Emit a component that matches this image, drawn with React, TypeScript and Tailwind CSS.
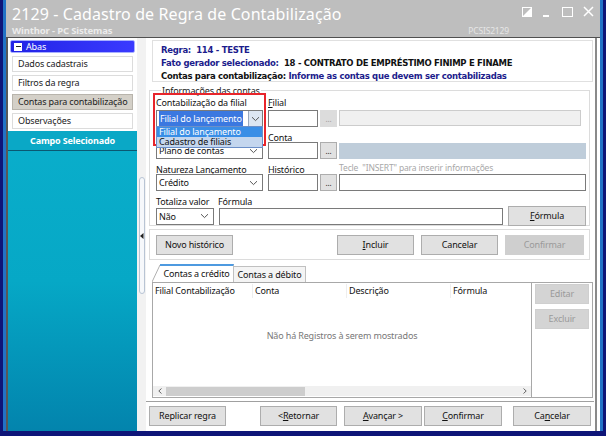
import React from "react";

const F = { fontFamily: '"Noto Sans", "Open Sans", sans-serif' } as React.CSSProperties;

function Btn({ children, className = "", disabled = false }: { children: React.ReactNode; className?: string; disabled?: boolean }) {
  return (
    <div
      className={
        "flex items-center justify-center h-[20px] border text-[9px] tracking-[-0.15px] " +
        (disabled ? "bg-[#cfcfcf] border-[#cfcfcf] text-[#9a9a9a] " : "bg-[#e1e1e1] border-[#adadad] text-[#111] ") +
        className
      }
    >
      {children}
    </div>
  );
}

function Chevron() {
  return (
    <svg width="9" height="6" viewBox="0 0 9 6">
      <path d="M1 1.2 L4.5 4.6 L8 1.2" fill="none" stroke="#555" strokeWidth="1" />
    </svg>
  );
}

function Select({ text, className = "", highlight = false }: { text: string; className?: string; highlight?: boolean }) {
  return (
    <div className={"flex items-center h-[17px] border border-[#7a7a7a] bg-white pl-[2px] text-[9px] text-[#111] " + className}>
      <span className="flex-1 leading-none">
        {highlight ? <span className="bg-[#3b78e0] text-white px-[1px] py-[1px]">{text}</span> : text}
      </span>
      {highlight ? (
        <span className="w-[14px] h-full border-l border-[#9aa8bc] bg-[#dde6f2] flex items-center justify-center">
          <Chevron />
        </span>
      ) : (
        <span className="pr-[4px] flex items-center">
          <Chevron />
        </span>
      )}
    </div>
  );
}

function Input({ className = "" }: { className?: string }) {
  return <div className={"h-[17px] border border-[#7a7a7a] bg-white " + className} />;
}

function Dots({ disabled = false }: { disabled?: boolean }) {
  return (
    <div
      className={
        "w-[17px] h-[17px] flex items-end justify-center pb-[3px] text-[8px] leading-none border " +
        (disabled ? "bg-[#dcdcdc] border-[#dcdcdc] text-[#9a9a9a]" : "bg-[#e1e1e1] border-[#adadad] text-[#222]")
      }
    >
      ...
    </div>
  );
}

export default function App() {
  return (
    <div className="w-[606px] h-[436px] bg-[#0e1578] pl-[3px] pr-[3px] pb-[5px] overflow-hidden tracking-[-0.15px]" style={F}>
      <div className="w-full h-full flex flex-col bg-[#c4c4c4] border-l-[3px] border-r-[3px] border-[#2273c6]">
        {/* title bar */}
        <div className="h-[37px] shrink-0 relative bg-[#bebebe] pl-[6px]">
          <div className="text-white text-[16px] leading-none pt-[6px] tracking-[0.1px]">
            2129 - Cadastro de Regra de Contabilização
          </div>
          <div className="flex items-end">
            <div className="text-[#ececec] text-[9.5px] font-bold pt-[4px] leading-none">Winthor - PC Sistemas</div>
            <div className="ml-auto mr-[91px] text-[#e6e6e6] text-[8.5px] leading-none">PCSIS2129</div>
          </div>
          <div className="absolute right-[6px] top-[6px] flex items-center gap-[10px]">
            <svg width="10" height="10" viewBox="0 0 10 10">
              <rect x="0.5" y="0.5" width="9" height="9" fill="none" stroke="#fff" />
              <path d="M0 10 L10 0 L10 10 Z" fill="#fff" />
            </svg>
            <svg width="10" height="10" viewBox="0 0 10 10">
              <rect x="1" y="8" width="6" height="2" fill="#fff" />
            </svg>
            <svg width="11" height="10" viewBox="0 0 11 10">
              <rect x="0.5" y="0.5" width="10" height="9" fill="none" stroke="#fff" />
            </svg>
            <svg width="11" height="11" viewBox="0 0 11 11">
              <path d="M1 1 L10 10 M10 1 L1 10" stroke="#fff" strokeWidth="1.5" />
            </svg>
          </div>
        </div>

        <div className="flex-1 flex min-h-0 border-t border-[#505050]">
          {/* sidebar */}
          <div className="w-[131px] shrink-0 flex flex-col bg-white border-l-[2px] border-[#585858]">
            <div className="px-[2px] pt-[2px] flex flex-col gap-[3px] bg-white pb-[2px]">
              <div className="h-[13px] flex items-center gap-[4px] pl-[3px] rounded-[2px] border border-[#a8b0ff] bg-gradient-to-r from-[#2222e6] to-[#3a3aff] text-white text-[9px]">
                <span className="w-[8px] h-[8px] bg-white flex items-center justify-center">
                  <span className="w-[5px] h-[1.5px] bg-[#222]" />
                </span>
                Abas
              </div>
              {["Dados cadastrais", "Filtros da regra", "Contas para contabilização", "Observações"].map((t, i) => (
                <div
                  key={t}
                  className={
                    "h-[16px] mx-[2px] flex items-center pl-[5px] text-[9px] text-[#222] border whitespace-nowrap " +
                    (i === 2 ? "bg-[#d4d0c8] border-[#b8b4ac]" : "bg-white border-[#dcdcdc]")
                  }
                >
                  {t}
                </div>
              ))}
            </div>
            <div className="flex-1 flex flex-col bg-gradient-to-b from-[#0aaecb] via-[#06a8c6] to-[#0384ad]">
              <div className="h-[20px] flex items-center justify-center text-white font-bold text-[9px] border-b border-[#0a5872] bg-[#0aa8c6]">
                Campo Selecionado
              </div>
              <div className="flex-1" />
            </div>
          </div>

          {/* splitter */}
          <div className="w-[9px] shrink-0 bg-[#f2f2f2] flex flex-col items-center pt-[139px]">
            <div className="w-[6px] h-[117px] rounded-[3px] border border-[#b8c4d4] bg-[#f6f8fb] flex items-center justify-center">
              <svg width="4" height="6" viewBox="0 0 4 6">
                <path d="M3.5 0 L0 3 L3.5 6 Z" fill="#222" />
              </svg>
            </div>
          </div>

          {/* main panel */}
          <div className="flex-1 min-w-0 flex flex-col bg-white border-r-[2px] border-[#8a8a8a] pr-[1px] text-[#111]">
            {/* info box */}
            <div className="mt-[2px] ml-[6px] mr-[1px] h-[42px] shrink-0 border border-[#e0e0e0] pl-[8px] pt-[3px] flex flex-col gap-[1px] text-[8.5px] font-bold leading-[12px]" style={{ fontFamily: '"DejaVu Sans", Verdana, sans-serif', letterSpacing: "-0.3px" }}>
              <div className="text-[#1c1c8c]">Regra:&nbsp; 114 - TESTE</div>
              <div>
                <span className="text-[#1c1c8c]">Fato gerador selecionado:</span>&nbsp; <span className="text-[#111]">18 - CONTRATO DE EMPRÉSTIMO FINIMP E FINAME</span>
              </div>
              <div>
                <span className="text-[#111]">Contas para contabilização:</span>&nbsp;<span className="text-[#1c1c8c]">Informe as contas que devem ser contabilizadas</span>
              </div>
            </div>

            {/* group */}
            <fieldset className="shrink-0 mt-[3px] ml-[3px] mr-[4px] border border-[#dcdcdc] pl-[6px] pr-[3px] h-[141px]">
              <legend className="ml-[5px] px-[1px] text-[9px] leading-[11px] text-[#222]">Informações das contas</legend>
              <div className="relative grid grid-cols-[107px_53px_17px_1fr] gap-x-[2px] text-[9px] leading-none">
                {/* row 1 */}
                <div className="pt-[2px] h-[14px]">Contabilização da filial</div>
                <div className="pt-[2px] h-[14px] ml-[3px] col-span-3"><u>F</u>ilial</div>
                <Select text="Filial do lançamento" className="bg-[#cfdcf0]" highlight />
                <Input className="ml-[3px]" />
                <Dots disabled />
                <div className="h-[16px] border border-[#cccccc] bg-[#f0f0f0] mr-[5px]" />
                {/* row 2 */}
                <div className="pt-[6px] h-[15px]" />
                <div className="pt-[6px] h-[15px] ml-[3px] col-span-3">Con<u>t</u>a</div>
                <Select text="Plano de contas" />
                <Input className="ml-[3px]" />
                <Dots />
                <div className="h-[16px] mt-[1px] bg-[#bfcdda]" />
                {/* row 3 */}
                <div className="pt-[6px] h-[15px]">Natureza Lançamento</div>
                <div className="pt-[6px] h-[15px] ml-[3px] col-span-2"><u>H</u>istórico</div>
                <div className="pt-[5px] h-[15px] text-[#a8a8a8] text-[8.5px] whitespace-nowrap">Tecle &nbsp;"INSERT" para inserir informações</div>
                <Select text="Crédito" />
                <Input className="ml-[3px]" />
                <Dots />
                <Input />

                {/* dropdown overlay */}
                <div className="absolute left-[-3px] top-[-3px] w-[113px] h-[53px] border-2 border-[#e8252b]" />
                <div className="absolute left-[0px] top-[30px] w-[107px] flex flex-col text-[9px] leading-none border border-[#6b8fc8] bg-white">
                  <div className="h-[10px] bg-[#3a8ee6] text-white pl-[2px]">Filial do lançamento</div>
                  <div className="h-[10px] bg-[#c4d6ee] text-[#111] pl-[2px] leading-[10px]">Cadastro de filiais</div>
                </div>
              </div>
              {/* row 4 */}
              <div className="flex text-[9px] leading-none">
                <div className="pt-[6px] h-[15px] w-[62px] shrink-0">Totaliza valor</div>
                <div className="pt-[6px] h-[15px]">Fórmula</div>
              </div>
              <div className="flex items-center">
                <Select text="Não" className="w-[58px]" />
                <div className="ml-[5px] w-[284px] h-[17px] border border-[#7a7a7a] bg-white" />
                <Btn className="ml-[5px] w-[78px]">
                  <u>F</u>órmula
                </Btn>
              </div>
            </fieldset>

            {/* buttons box */}
            <div className="shrink-0 mt-[3px] ml-[3px] mr-[4px] h-[31px] border border-[#dcdcdc] flex items-center pl-[6px]">
              <Btn className="w-[77px]">Novo histórico</Btn>
              <Btn className="w-[77px] ml-[104px]">
                <u>I</u>ncluir
              </Btn>
              <Btn className="w-[77px] ml-[7px]">Cancelar</Btn>
              <Btn className="w-[79px] ml-[7px]" disabled>
                Confirmar
              </Btn>
            </div>

            {/* tabs */}
            <div className="shrink-0 mt-[4px] ml-[6px] h-[18px] flex items-end text-[9px]">
              <svg width="8" height="18" viewBox="0 0 8 18" className="block">
                <path d="M0 18 L8 1" stroke="#b0b0b0" fill="none" />
              </svg>
              <div className="h-[18px] w-[74px] flex items-center justify-center border-t-2 border-[#4e9ae0] bg-white border-r border-r-[#c0c0c0]">
                Contas a crédito
              </div>
              <div className="h-[16px] w-[72px] flex items-center justify-center border-t border-r border-[#c0c0c0] bg-[#f4f4f4]">
                Contas a débito
              </div>
            </div>

            {/* grid area */}
            <div className="shrink-0 ml-[6px] mr-[1px] h-[116px] flex border border-[#a8a8a8]">
              <div className="flex-1 flex flex-col border-r border-[#a8a8a8] text-[9px]">
                <div className="h-[16px] flex items-center text-[#111]">
                  <div className="w-[100px] pl-[2px] border-r border-[#eeeeee]">Filial Contabilização</div>
                  <div className="w-[94px] pl-[2px] border-r border-[#eeeeee]">Conta</div>
                  <div className="w-[104px] pl-[2px] border-r border-[#eeeeee]">Descrição</div>
                  <div className="pl-[2px]">Fórmula</div>
                </div>
                <div className="flex-1 flex items-center justify-center text-[#777] pb-[14px]">Não há Registros à serem mostrados</div>
                <div className="h-[10px] mb-[1px] flex items-center bg-[#f0f0f0] text-[#555]">
                  <div className="w-[13px] flex justify-center">
                    <svg width="4" height="6" viewBox="0 0 4 6"><path d="M3.5 0.5 L0.8 3 L3.5 5.5" fill="none" stroke="#666" /></svg>
                  </div>
                  <div className="w-[139px] h-[9px] bg-[#cdcdcd]" />
                  <div className="flex-1" />
                  <div className="w-[13px] flex justify-center">
                    <svg width="4" height="6" viewBox="0 0 4 6"><path d="M0.5 0.5 L3.2 3 L0.5 5.5" fill="none" stroke="#666" /></svg>
                  </div>
                </div>
              </div>
              <div className="w-[60px] flex flex-col gap-[5px] pt-[1px] px-[3px]">
                <Btn disabled className="bg-[#d4d4d4] border-[#c8c8c8]">Editar</Btn>
                <Btn disabled className="bg-[#d4d4d4] border-[#c8c8c8]">Excluir</Btn>
              </div>
            </div>

            {/* bottom bar */}
            <div className="mt-[3px] flex-1 border-t border-[#a0a0a0] flex items-center pl-[3px] pb-[1px]">
              <Btn className="w-[77px]">Replicar regra</Btn>
              <Btn className="w-[77px] ml-[34px]">
                &lt; <u>R</u>etornar
              </Btn>
              <Btn className="w-[78px] ml-[7px]">
                <u>A</u>vançar &gt;
              </Btn>
              <Btn className="w-[78px] ml-[2px]">
                <u>C</u>onfirmar
              </Btn>
              <Btn className="w-[78px] ml-[11px]">
                Ca<u>n</u>celar
              </Btn>
            </div>
          </div>
          <div className="w-[3px] shrink-0 bg-white" />
        </div>
      </div>
    </div>
  );
}
